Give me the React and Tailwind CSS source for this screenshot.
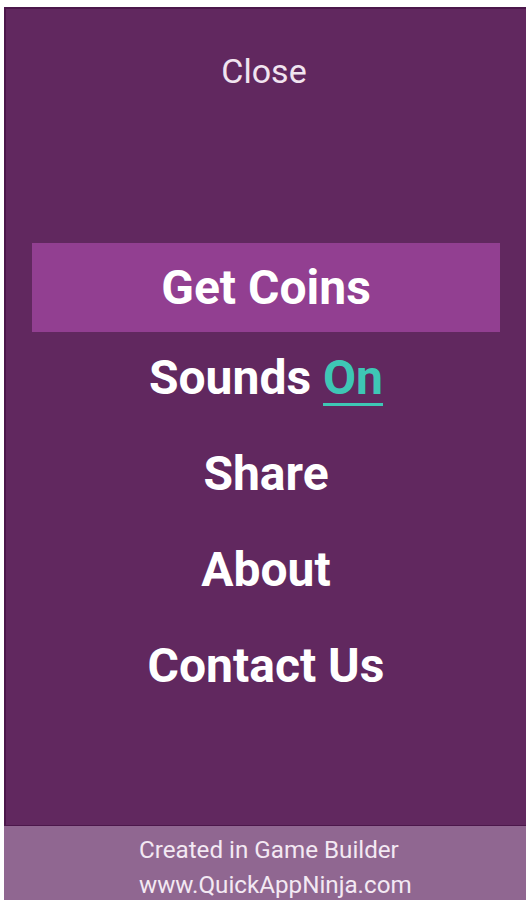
export default function App() {
  const font = { fontFamily: 'Roboto, "Liberation Sans", sans-serif' };
  return (
    <div className="w-[526px] h-[900px] bg-white pt-[7px] pl-[4px] overflow-hidden" style={font}>
      <div className="h-[893px] flex flex-col border-t-[2px] border-l-[2px] border-[#4c174b] bg-[#61285f]">
        <div className="flex-1 flex flex-col items-center">
          <div className="mt-[42px] text-[34px] leading-[40px] text-[#f1e4f0] ml-[-4px]">Close</div>
          <div className="mt-[152px] w-[468px] h-[89px] bg-[#923f91] flex items-center justify-center text-white font-bold text-[48px]">
            Get Coins
          </div>
          <div className="flex flex-col items-center text-white font-bold text-[48px] leading-[96px] mt-[-2px]">
            <div>
              Sounds <span className="text-[#3ec7b5] underline underline-offset-[9px] decoration-[3px]">On</span>
            </div>
            <div>Share</div>
            <div>About</div>
            <div>Contact Us</div>
          </div>
        </div>
        <div className="h-[75px] ml-[-2px] border-t border-[#4c174b] bg-[#906791] flex flex-col items-start pl-[135px] pt-[7px] text-[#f3e9f3] text-[24.2px] leading-[35px]">
          <div>Created in Game Builder</div>
          <div>www.QuickAppNinja.com</div>
        </div>
      </div>
    </div>
  );
}
